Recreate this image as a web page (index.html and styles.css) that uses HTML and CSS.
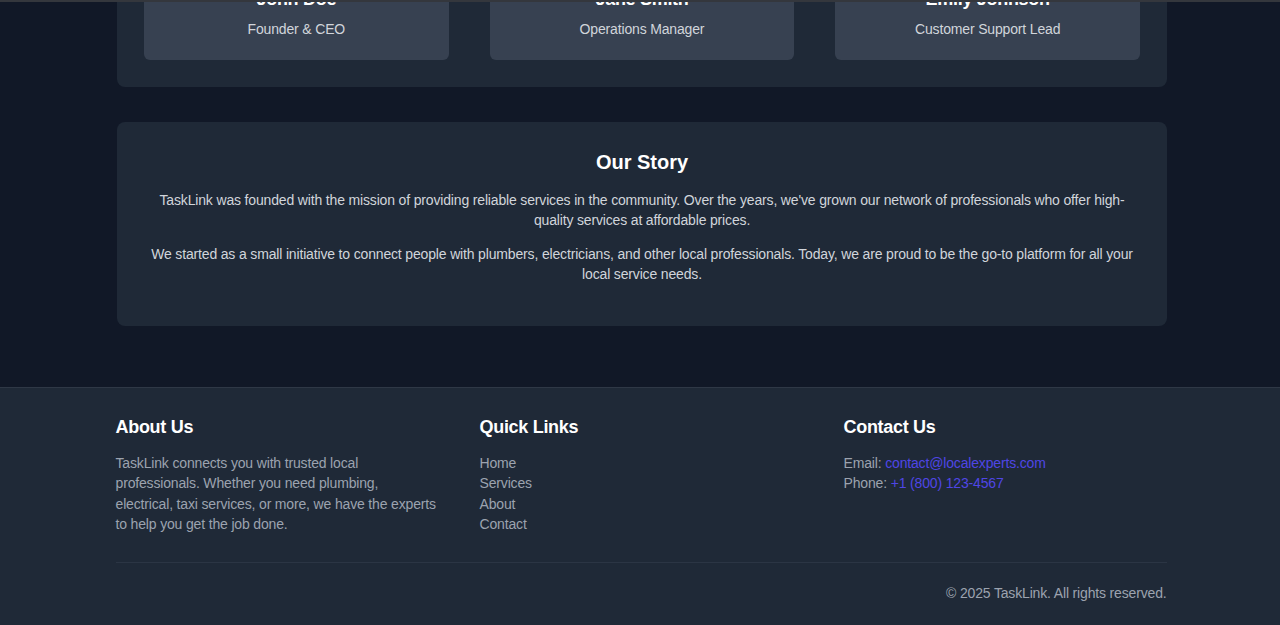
FILE: index.html
```html
<!DOCTYPE html>
<html lang="en">
<head>
<meta charset="utf-8">
<title>About - TaskLink</title>
<link rel="stylesheet" href="styles.css">
</head>
<body>
<div class="header-edge"></div>
<main class="main">
  <section class="team">
    <div class="team-grid">
      <div class="member">
        <h3 class="member-name">John Doe</h3>
        <p class="member-role">Founder &amp; CEO</p>
      </div>
      <div class="member">
        <h3 class="member-name">Jane Smith</h3>
        <p class="member-role">Operations Manager</p>
      </div>
      <div class="member">
        <h3 class="member-name">Emily Johnson</h3>
        <p class="member-role">Customer Support Lead</p>
      </div>
    </div>
  </section>

  <section class="story">
    <h2 class="story-title">Our Story</h2>
    <p class="story-text">TaskLink was founded with the mission of providing reliable services in the community. Over the years, we've grown our network of professionals who offer high-quality services at affordable prices.</p>
    <p class="story-text">We started as a small initiative to connect people with plumbers, electricians, and other local professionals. Today, we are proud to be the go-to platform for all your local service needs.</p>
  </section>
</main>

<footer class="footer">
  <div class="footer-inner">
    <div class="footer-cols">
      <div class="footer-col">
        <h4 class="footer-title">About Us</h4>
        <p class="footer-text">TaskLink connects you with trusted local professionals. Whether you need plumbing, electrical, taxi services, or more, we have the experts to help you get the job done.</p>
      </div>
      <div class="footer-col">
        <h4 class="footer-title">Quick Links</h4>
        <ul class="footer-links">
          <li><a href="#">Home</a></li>
          <li><a href="#">Services</a></li>
          <li><a href="#">About</a></li>
          <li><a href="#">Contact</a></li>
        </ul>
      </div>
      <div class="footer-col">
        <h4 class="footer-title">Contact Us</h4>
        <p class="footer-text">Email: <a class="accent" href="#">contact@localexperts.com</a></p>
        <p class="footer-text">Phone: <a class="accent" href="#">+1 (800) 123-4567</a></p>
      </div>
    </div>
    <div class="footer-bottom">
      <p class="copyright">© 2025 TaskLink. All rights reserved.</p>
    </div>
  </div>
</footer>
</body>
</html>
```

FILE: styles.css
```css
* { box-sizing: border-box; }

html, body {
  margin: 0;
  padding: 0;
  background: #111827;
  font-family: "Liberation Sans", Arial, sans-serif;
  color: #d1d5db;
  overflow: hidden;
}

.header-edge {
  position: fixed;
  top: 0;
  left: 0;
  right: 0;
  height: 2px;
  background: #34373d;
  z-index: 10;
}

.main {
  width: 1050px;
  margin: 0 auto;
  padding-bottom: 61px;
  position: relative;
  left: 2px;
}

.team {
  margin-top: -58px;
  background: #1f2937;
  border-radius: 8px;
  padding: 27px;
}

.team-grid {
  display: grid;
  grid-template-columns: repeat(3, 1fr);
  gap: 41px;
}

.member {
  background: #374151;
  border-radius: 6px;
  padding: 16px 24px 21px;
  text-align: center;
}

.member-name {
  margin: 0 0 6px;
  font-size: 18px;
  line-height: 28px;
  font-weight: 700;
  color: #ffffff;
  letter-spacing: -0.3px;
}

.member-role {
  margin: 0;
  font-size: 14px;
  line-height: 20px;
  color: #d1d5db;
  letter-spacing: -0.16px;
}

.story {
  margin-top: 35px;
  background: #1f2937;
  border-radius: 8px;
  padding: 26px 28px 28px;
  text-align: center;
}

.story-title {
  margin: 0 0 14px;
  font-size: 20px;
  line-height: 28px;
  font-weight: 700;
  color: #ffffff;
}

.story-text {
  margin: 0 0 14px;
  font-size: 14px;
  line-height: 20px;
  color: #d1d5db;
  letter-spacing: -0.16px;
}

.footer {
  background: #1f2937;
  border-top: 1px solid #2f3846;
  padding-bottom: 40px;
}

.footer-inner {
  width: 1051px;
  margin: 0 auto;
  padding-top: 25px;
  position: relative;
  left: 1px;
}

.footer-cols {
  display: grid;
  grid-template-columns: repeat(3, 1fr);
  gap: 41px;
}

.footer-title {
  margin: 0 0 12px;
  font-size: 18px;
  line-height: 28px;
  font-weight: 700;
  color: #ffffff;
  letter-spacing: -0.3px;
}

.footer-text {
  margin: 0;
  font-size: 14px;
  line-height: 20.33px;
  color: #9ca3af;
  letter-spacing: -0.16px;
}

.footer-links {
  list-style: none;
  margin: 0;
  padding: 0;
  font-size: 14px;
  line-height: 20.33px;
  letter-spacing: -0.16px;
}

.footer-links a {
  color: #9ca3af;
  text-decoration: none;
}

.accent {
  color: #4f46e5;
  text-decoration: none;
}

.footer-bottom {
  margin-top: 28px;
  border-top: 1px solid #2b3544;
  padding-top: 20px;
  text-align: right;
}

.copyright {
  margin: 0;
  font-size: 14px;
  line-height: 20px;
  color: #9ca3af;
  letter-spacing: -0.16px;
}
```
